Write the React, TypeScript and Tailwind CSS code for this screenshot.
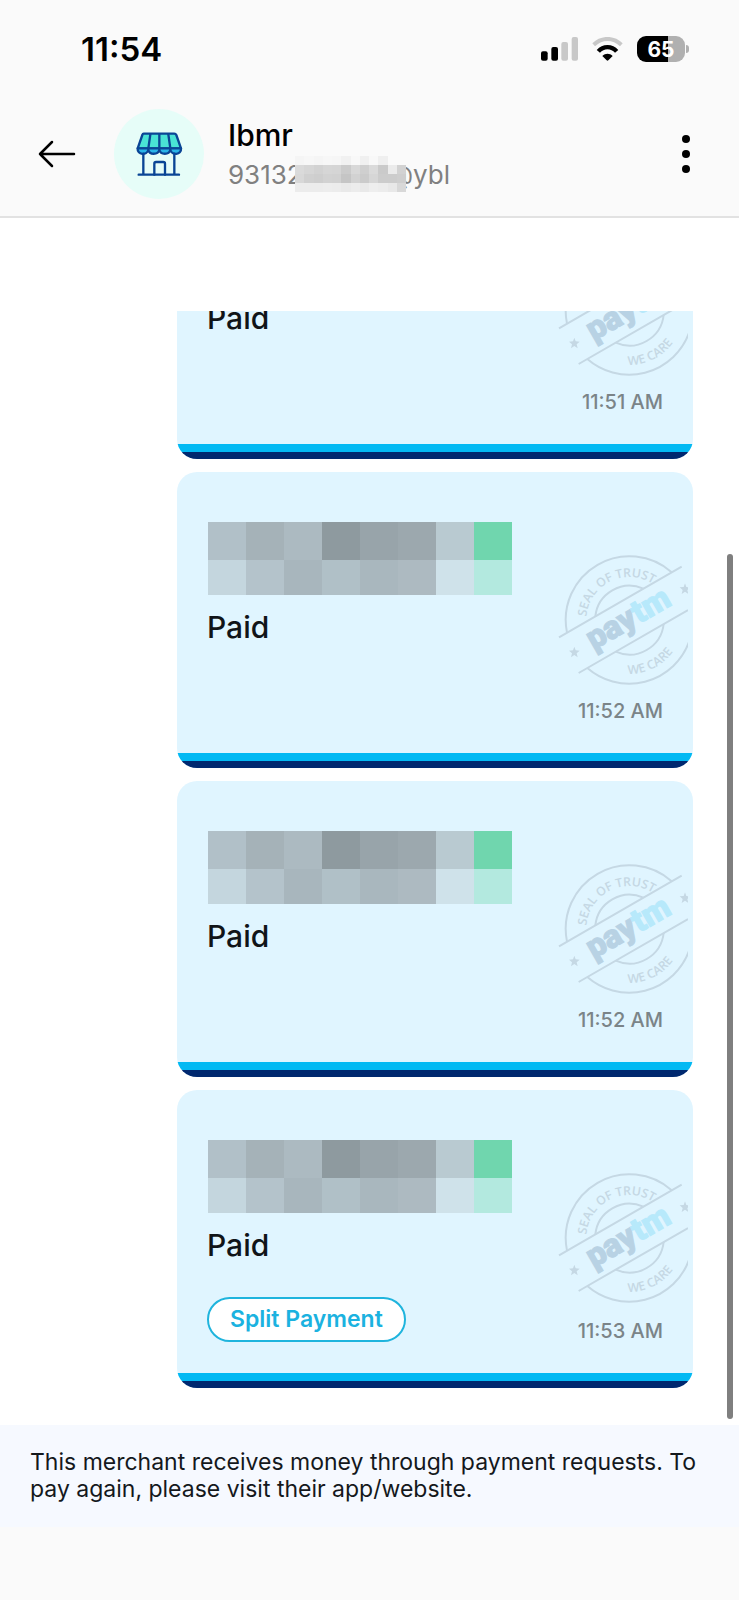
import { clsx } from "clsx";

type Payment = {
  id: number;
  time: string;
  canSplit?: boolean;
};

const payments: Payment[] = [
  { id: 2, time: "11:52 AM" },
  { id: 3, time: "11:52 AM" },
  { id: 4, time: "11:53 AM", canSplit: true },
];

const amountTop = [
  "#b1c0c8", "#a5b2b8", "#acbac1", "#8e9a9f", "#98a4aa", "#9ca8ae", "#b9cad1", "#70d6ae",
];
const amountBottom = [
  "#c4d6de", "#b4c3cb", "#a8b6bd", "#b0c0c7", "#a9b7be", "#adbac1", "#cfe2ea", "#b3e9df",
];

const handleCells = [
  "#f5f5f5", "#f7f7f7", "#f5f5f5", "#f7f7f7", "#f6f6f6", "#f1f1f1", "#f8f8f8", "#f0f0f0", "#f8f8f8", "#efefef", "#fafafa", "#fafafa",
  "#dadada", "#d6d6d6", "#d2d2d2", "#d6d6d6", "#d5d5d5", "#cbcbcb", "#d8d8d8", "#cfcfcf", "#dadada", "#cacaca", "#ebebeb", "#d2d2d2",
  "#d8d8d8", "#d0d0d0", "#cecece", "#d2d2d2", "#d1d1d1", "#c5c5c5", "#d2d2d2", "#cbcbcb", "#d6d6d6", "#cccccc", "#cccccc", "#cecece",
  "#ececec", "#ececec", "#ececec", "#ededed", "#ececec", "#e9e9e9", "#ececec", "#e9e9e9", "#eeeeee", "#ececec", "#e8e8e8", "#d8d8d8",
];

function SignalIcon() {
  return (
    <svg viewBox="0 0 111 72" className="h-6 w-[37px]" aria-hidden="true">
      <rect x="0" y="43" width="20" height="28" rx="6" />
      <rect x="31" y="30" width="20" height="41" rx="6" />
      <rect x="61" y="15" width="20" height="56" rx="6" fill="#c8c8c8" />
      <rect x="92" y="0" width="19" height="71" rx="6" fill="#c8c8c8" />
    </svg>
  );
}

function WifiIcon() {
  return (
    <svg viewBox="0 0 93 72" className="h-6 w-[31px]" fill="none" aria-hidden="true">
      <path d="M5 23C30 0 63 0 88 23" stroke="#c8c8c8" strokeWidth="12" />
      <path d="M19 43C34 26 59 26 74 43" stroke="#000" strokeWidth="13" />
      <path d="M31 57C40 48 53 48 62 57L49 70Q46.5 72 44 70Z" fill="#000" />
    </svg>
  );
}

function Battery() {
  return (
    <div className="flex items-center gap-px" aria-label="Battery 65 percent">
      <div className="flex h-[26px] w-12 items-center justify-center rounded-[9px] bg-linear-to-r from-black from-65% to-[#b0b0b0] to-65% text-[21px] leading-none font-bold text-white">
        65
      </div>
      <div className="h-2 w-[3px] rounded-r-full bg-[#b0b0b0]" />
    </div>
  );
}

function ShopIcon() {
  return (
    <svg
      viewBox="13 12 270 270"
      className="size-[90px] shrink-0 rounded-full bg-[#e6fdf8]"
      fill="none"
      stroke="#0a4595"
      strokeWidth="7"
      strokeLinecap="round"
      strokeLinejoin="round"
      aria-hidden="true"
    >
      <path d="M102 86H194Q198 86 200 90L214 130H84L98 90Q99 86 102 86Z" fill="#4ae3d5" />
      <path
        d="M84 130C82 151 112 151 116 135C119 150 145 150 149 135C153 150 178 150 182 135C186 151 216 151 214 130Z"
        fill="#2ab5e8"
      />
      <path d="M122 88L116 130M149 88V130M176 88L182 130" />
      <path d="M101 146V209M194 146V209M87 209H208" />
      <path d="M134 209V176Q134 171 139 171H161Q166 171 166 176V209" />
    </svg>
  );
}

function TrustSeal() {
  return (
    <svg
      viewBox="53 45 390 390"
      className="absolute top-[83px] right-[5px] size-[130px]"
      fill="none"
      role="img"
      aria-label="Paytm seal of trust"
    >
      <defs>
        <path id="seal-top" d="M138 240A129 129 0 0 1 396 240" />
        <path id="seal-bottom" d="M105 240A162 162 0 0 0 429 240" />
      </defs>
      <g stroke="#c5d8e4" strokeWidth="6">
        <path d="M56 292L424 80M115 399L443 210" />
        <path d="M80 278A191 191 0 0 1 394 97" />
        <path d="M141 384A191 191 0 0 0 446 306" />
        <path d="M165 229A103 103 0 0 1 309 146" />
        <path d="M226 335A103 103 0 0 0 370 252" />
      </g>
      <g fill="#c5d8e4">
        <path d="M102 320L106 331L118 332L109 340L112 352L102 345L92 352L95 340L86 332L98 331Z" />
        <path d="M434 130L438 141L450 142L441 150L444 162L434 155L424 162L427 150L418 142L430 141Z" />
      </g>
      <g fill="#c5d8e4" className="font-['Open_Sans',sans-serif] text-[37px] font-semibold">
        <text>
          <textPath href="#seal-top" startOffset="10">SEAL OF TRUST</textPath>
        </text>
        <text>
          <textPath href="#seal-bottom" startOffset="250">WE CARE</textPath>
        </text>
      </g>
      <text
        transform="translate(160 331) rotate(-30)"
        className="font-[Roboto,sans-serif] text-[98px] font-black"
        fill="#b8d2e4"
        stroke="#b8d2e4"
        strokeWidth="3"
      >
        pay<tspan fill="#b7e9fb" stroke="#b7e9fb">tm</tspan>
      </text>
    </svg>
  );
}

function PaymentCard({ time, canSplit }: Omit<Payment, "id">) {
  return (
    <article
      className={clsx(
        "relative flex shrink-0 flex-col overflow-hidden rounded-[20px] bg-[#e0f5ff]",
        canSplit ? "h-[298px]" : "h-[296px]",
      )}
    >
      <div className="flex-1 px-[30px] pt-[50px]">
        <div className="ml-px grid w-[304px] grid-cols-8" aria-hidden="true">
          {amountTop.map((color, i) => (
            <div key={i} className="h-[38px]" style={{ backgroundColor: color }} />
          ))}
          {amountBottom.map((color, i) => (
            <div key={i} className="h-[35px]" style={{ backgroundColor: color }} />
          ))}
        </div>
        <p className="mt-[14px] text-[30px] leading-9 font-medium text-[#101418]">Paid</p>
        {canSplit && (
          <button
            type="button"
            className="mt-[34px] h-[45px] rounded-full border-2 border-[#1fb4dd] bg-white px-[21px] text-[23px] leading-none font-semibold text-[#1bb2e0]"
          >
            Split Payment
          </button>
        )}
      </div>
      <TrustSeal />
      <time className="absolute right-[30px] bottom-[45px] text-[20px] leading-6 font-medium text-[#7b8488]">
        {time}
      </time>
      <div className="h-2 bg-[#02b9f3]" />
      <div className="h-[7px] bg-[#00286f]" />
    </article>
  );
}

export default function App() {
  return (
    <div className="flex min-h-screen flex-col bg-[#fafafa] font-[Inter,sans-serif] text-black">
      <header className="border-b-2 border-[#e2e2e2]">
        <div className="flex h-[98px] items-center justify-between pr-[50px] pl-[81px]">
          <span className="text-[33px] leading-none font-semibold">11:54</span>
          <div className="flex items-center gap-[14px]">
            <SignalIcon />
            <WifiIcon />
            <Battery />
          </div>
        </div>
        <div className="flex h-[118px] items-center pr-[43px] pb-[6px] pl-[38px]">
          <button type="button" aria-label="Back" className="mr-[38px]">
            <svg
              viewBox="0 0 38 28"
              className="h-7 w-[38px]"
              fill="none"
              stroke="#000"
              strokeWidth="2.5"
              strokeLinecap="round"
              strokeLinejoin="round"
            >
              <path d="M14 2L2 14L14 26M2 14H36" />
            </svg>
          </button>
          <ShopIcon />
          <div className="ml-6 flex-1">
            <h1 className="text-[30px] leading-10 font-medium">Ibmr</h1>
            <p className="flex h-[38px] items-center text-[26px] text-[#808080]">
              <span className="w-[67px]">93132</span>
              <span className="z-10 grid w-[111px] grid-cols-12" aria-hidden="true">
                {handleCells.map((color, i) => (
                  <span key={i} className="h-[9px]" style={{ backgroundColor: color }} />
                ))}
              </span>
              <span className="-ml-[18px]">@ybl</span>
            </p>
          </div>
          <button type="button" aria-label="More options" className="flex w-5 flex-col items-center gap-[7px]">
            <span className="size-2 rounded-full bg-black" />
            <span className="size-2 rounded-full bg-black" />
            <span className="size-2 rounded-full bg-black" />
          </button>
        </div>
      </header>

      <main className="relative flex flex-col gap-[13px] bg-white pt-[93px] pr-[46px] pb-[37px] pl-[177px]">
        <div className="flex h-[148px] flex-col justify-end overflow-hidden">
          <PaymentCard time="11:51 AM" />
        </div>
        {payments.map(({ id, ...payment }) => (
          <PaymentCard key={id} {...payment} />
        ))}
        <div className="absolute top-[336px] right-[6px] bottom-[6px] w-[6px] rounded-full bg-[#7f7f7f]" />
      </main>

      <footer className="bg-[#f6f9ff] px-[30px] py-6 text-[23px] leading-[27px] text-[#14181c]">
        This merchant receives money through payment requests. To pay again, please visit their
        app/website.
      </footer>
    </div>
  );
}
